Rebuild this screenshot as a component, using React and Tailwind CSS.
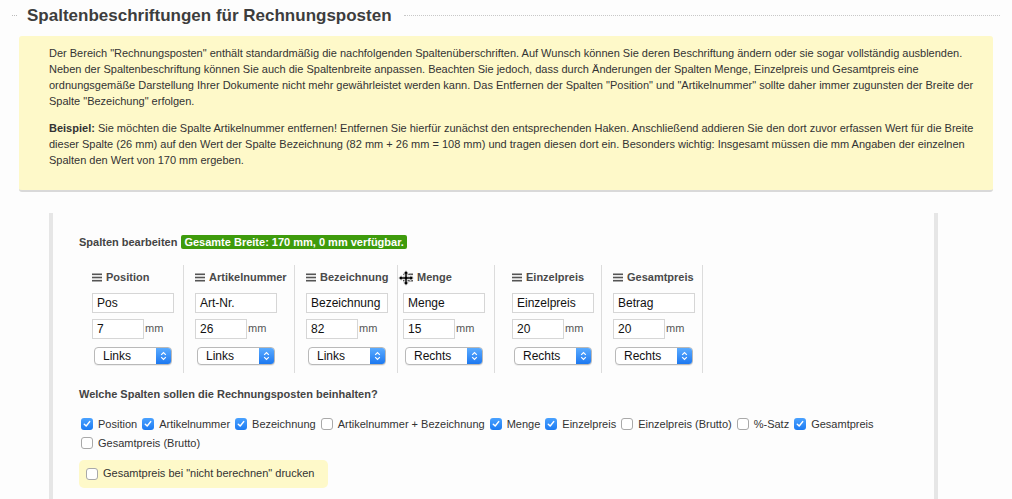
import React from 'react';

const columns = [
  { label: 'Position', text: 'Pos', mm: '7', align: 'Links', cls: 'w-[105px] pl-[13px]' },
  { label: 'Artikelnummer', text: 'Art-Nr.', mm: '26', align: 'Links', cls: 'w-[111px] pl-[11px]' },
  { label: 'Bezeichnung', text: 'Bezeichnung', mm: '82', align: 'Links', cls: 'w-[103px] pl-[11px]' },
  { label: 'Menge', text: 'Menge', mm: '15', align: 'Rechts', cls: 'w-[97px] pl-[5px]' },
  { label: 'Einzelpreis', text: 'Einzelpreis', mm: '20', align: 'Rechts', cls: 'w-[107px] pl-[17px]' },
  { label: 'Gesamtpreis', text: 'Betrag', mm: '20', align: 'Rechts', cls: 'w-[101px] pl-[11px]' },
];

const row1 = [
  ['Position', true],
  ['Artikelnummer', true],
  ['Bezeichnung', true],
  ['Artikelnummer + Bezeichnung', false],
  ['Menge', true],
  ['Einzelpreis', true],
  ['Einzelpreis (Brutto)', false],
  ['%-Satz', false],
  ['Gesamtpreis', true],
];

function Check({ checked }) {
  if (checked) {
    return (
      <span className="flex h-[12px] w-[12px] shrink-0 items-center justify-center rounded-[3px] bg-gradient-to-b from-[#4aa2ff] to-[#1a7af2]">
        <svg width="8" height="8" viewBox="0 0 8 8">
          <path d="M1.3 4.2 L3.2 6 L6.7 1.6" fill="none" stroke="white" strokeWidth="1.5" strokeLinecap="round" strokeLinejoin="round" />
        </svg>
      </span>
    );
  }
  return <span className="h-[12px] w-[12px] shrink-0 rounded-[3px] border border-[#a9a9a9] bg-white" />;
}

function Item({ label, checked }) {
  return (
    <label className="mr-[5px] flex items-center gap-[5px]">
      <Check checked={checked} />
      <span>{label}</span>
    </label>
  );
}

function Bars() {
  return (
    <svg width="10" height="9" viewBox="0 0 10 9" className="shrink-0">
      <rect x="0" y="0.5" width="10" height="1.6" fill="#555" />
      <rect x="0" y="3.7" width="10" height="1.6" fill="#555" />
      <rect x="0" y="6.9" width="10" height="1.6" fill="#555" />
    </svg>
  );
}

function FakeSelect({ value }) {
  return (
    <div className="ml-[2px] flex h-[18px] w-[78px] items-center overflow-hidden rounded-[4px] border border-[#b9b9b9] bg-white shadow-[0_1px_0_rgba(0,0,0,0.06)]">
      <span className="flex-1 pl-[8px] text-[12px] text-[#111]">{value}</span>
      <span className="flex h-full w-[15px] items-center justify-center bg-gradient-to-b from-[#5aabff] to-[#1b78f0]">
        <svg width="7" height="10" viewBox="0 0 7 10">
          <path d="M1.2 3.8 L3.5 1.5 L5.8 3.8 M1.2 6.2 L3.5 8.5 L5.8 6.2" fill="none" stroke="white" strokeWidth="1.2" />
        </svg>
      </span>
    </div>
  );
}

export default function App() {
  return (
    <div className="relative h-[499px] w-[1012px] overflow-hidden bg-[#fdfdfd] font-['Liberation_Sans',Arial,sans-serif] text-[#333]">
      {/* title */}
      <div className="flex h-[30px] items-center pl-[12px] pr-[12px]">
        <span className="w-[5px] border-t border-dotted border-[#bbb]" />
        <h2 className="ml-[10px] whitespace-nowrap text-[17px] font-bold leading-none text-[#3d3d3d]">
          Spaltenbeschriftungen für Rechnungsposten
        </h2>
        <span className="ml-[12px] flex-1 border-t border-dotted border-[#c8c8c8]" />
      </div>

      {/* info box */}
      <div className="ml-[19px] mt-[6px] w-[974px] rounded-[3px] border-b-2 border-[#d9d9d9] bg-[#fef9c9] pb-[22px] pl-[30px] pr-[10px] pt-[9px] text-[11px] leading-[16px] text-[#333]">
        <p className="whitespace-nowrap">
          Der Bereich "Rechnungsposten" enthält standardmäßig die nachfolgenden Spaltenüberschriften. Auf Wunsch können Sie deren Beschriftung ändern oder sie sogar vollständig ausblenden.
          <br />
          Neben der Spaltenbeschriftung können Sie auch die Spaltenbreite anpassen. Beachten Sie jedoch, dass durch Änderungen der Spalten Menge, Einzelpreis und Gesamtpreis eine
          <br />
          ordnungsgemäße Darstellung Ihrer Dokumente nicht mehr gewährleistet werden kann. Das Entfernen der Spalten "Position" und "Artikelnummer" sollte daher immer zugunsten der Breite der
          <br />
          Spalte "Bezeichung" erfolgen.
        </p>
        <p className="mt-[11px] whitespace-nowrap">
          <b>Beispiel:</b> Sie möchten die Spalte Artikelnummer entfernen! Entfernen Sie hierfür zunächst den entsprechenden Haken. Anschließend addieren Sie den dort zuvor erfassen Wert für die Breite
          <br />
          dieser Spalte (26 mm) auf den Wert der Spalte Bezeichnung (82 mm + 26 mm = 108 mm) und tragen diesen dort ein. Besonders wichtig: Insgesamt müssen die mm Angaben der einzelnen
          <br />
          Spalten den Wert von 170 mm ergeben.
        </p>
      </div>

      {/* editor panel */}
      <div className="ml-[49px] mt-[21px] h-[400px] w-[889px] border-x-4 border-[#e6e6e6] pl-[26px] pt-[21px] text-[11px]">
        <div className="flex items-center gap-[4px]">
          <span className="font-bold text-[#444]">Spalten bearbeiten</span>
          <span className="rounded-[2px] bg-[#3e9b0c] px-[3px] py-[1px] text-[11px] font-bold leading-[12px] text-white">
            Gesamte Breite: 170 mm, 0 mm verfügbar.
          </span>
        </div>

        <div className="mt-[14px] flex">
          {columns.map((c) => (
            <div key={c.label} className={`${c.cls} border-r border-[#dcdcdc] pb-[8px] pt-[5px]`}>
              <div className="flex h-[16px] items-center gap-[4px] whitespace-nowrap text-[11px] font-bold text-[#4a4a4a]">
                <Bars />
                {c.label}
              </div>
              <div className="mt-[7px] flex h-[20px] w-[82px] items-center border border-[#d6d6d6] bg-white pl-[4px] text-[12px] text-[#111]">
                {c.text}
              </div>
              <div className="mt-[6px] flex items-center">
                <div className="flex h-[20px] w-[52px] items-center border border-[#d6d6d6] bg-white pl-[4px] text-[12px] text-[#111]">
                  {c.mm}
                </div>
                <span className="ml-[1px] text-[11px] text-[#555]">mm</span>
              </div>
              <div className="mt-[8px]">
                <FakeSelect value={c.align} />
              </div>
            </div>
          ))}
        </div>

        <div className="mt-[13px] font-bold leading-[16px] text-[#444]">
          Welche Spalten sollen die Rechnungsposten beinhalten?
        </div>

        <div className="mt-[13px] pl-[2px] leading-[19px] text-[#333]">
          <div className="flex">
            {row1.map(([l, c]) => (
              <Item key={l} label={l} checked={c} />
            ))}
          </div>
          <div className="flex">
            <Item label="Gesamtpreis (Brutto)" checked={false} />
          </div>
        </div>

        <div className="mt-[7px] flex h-[28px] w-[249px] items-center gap-[5px] rounded-[5px] bg-[#fef9c9] pl-[7px] text-[#333]">
          <Check checked={false} />
          <span>Gesamtpreis bei "nicht berechnen" drucken</span>
        </div>
      </div>

      {/* mouse cursor */}
      <svg className="absolute left-[398px] top-[270px]" width="16" height="16" viewBox="0 0 16 16">
        <path
          d="M8 0.5 L11 3.8 L9.2 3.8 L9.2 6.8 L12.2 6.8 L12.2 5 L15.5 8 L12.2 11 L12.2 9.2 L9.2 9.2 L9.2 12.2 L11 12.2 L8 15.5 L5 12.2 L6.8 12.2 L6.8 9.2 L3.8 9.2 L3.8 11 L0.5 8 L3.8 5 L3.8 6.8 L6.8 6.8 L6.8 3.8 L5 3.8 Z"
          fill="#000"
          stroke="#fff"
          strokeWidth="0.8"
        />
      </svg>
    </div>
  );
}
